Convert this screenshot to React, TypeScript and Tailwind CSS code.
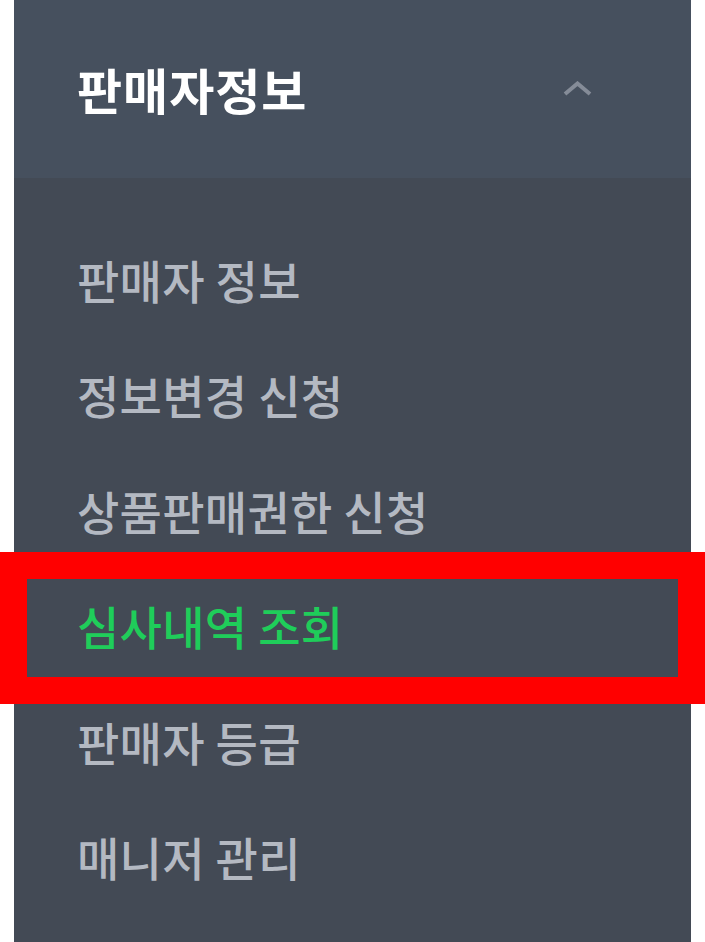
const menuItems = [
    { label: '판매자 정보', active: false },
    { label: '정보변경 신청', active: false },
    { label: '상품판매권한 신청', active: false },
    { label: '심사내역 조회', active: true },
    { label: '판매자 등급', active: false },
    { label: '매니저 관리', active: false },
];

export default function App() {
    return (
        <div
            className="relative min-h-[942px] w-[705px] bg-white"
            style={{ fontFamily: '"Noto Sans CJK KR", "Noto Sans", sans-serif' }}
        >
            <aside className="ml-[14px] flex h-[942px] w-[677px] flex-col bg-[#434a55]">
                <div className="flex h-[178px] items-center justify-between bg-[#46505e] pl-[63px] pr-[99px]">
                    <span className="-mt-[2px] text-[49px] font-bold leading-none tracking-[1px] text-white">판매자정보</span>
                    <svg width="29" height="15" viewBox="0 0 29 15" fill="none" className="-mt-[2px]">
                        <path d="M2 13 L14.5 2.5 L27 13" stroke="#858c98" strokeWidth="4" strokeLinejoin="miter" />
                    </svg>
                </div>
                <ul className="flex flex-col pt-[43px]">
                    {menuItems.map((item) => (
                        <li
                            key={item.label}
                            className={`flex h-[115.5px] items-center pl-[63px] text-[46px] font-medium leading-none tracking-[0.3px] ${
                                item.active ? 'text-[#1fcd5a]' : 'text-[#b4b9c2]'
                            }`}
                        >
                            {item.label}
                        </li>
                    ))}
                </ul>
            </aside>

            {/* highlight annotation */}
            <div className="pointer-events-none absolute left-0 top-[552px] h-[152px] w-[705px] border-[27px] border-[#ff0000]" />
        </div>
    );
}
